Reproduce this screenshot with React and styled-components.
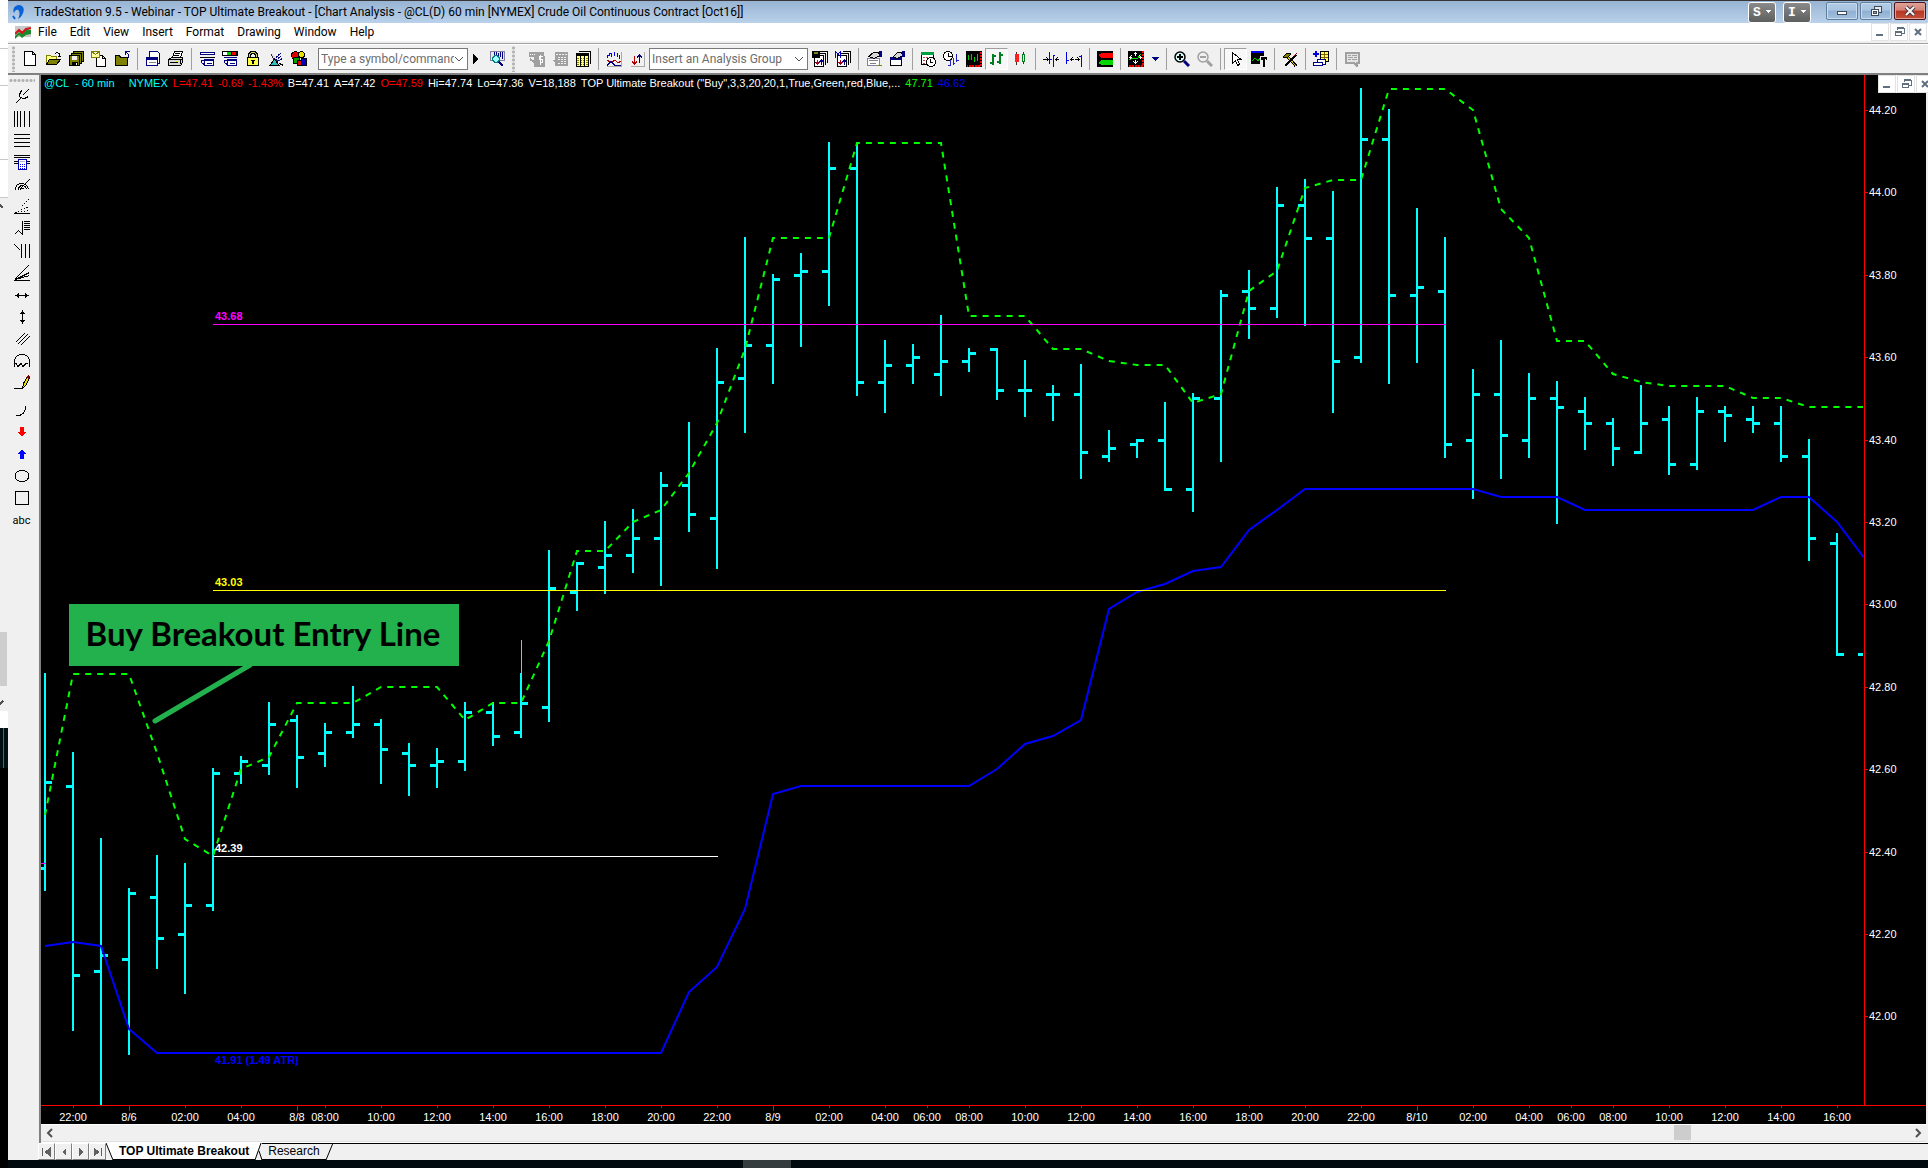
import React, { useState } from 'react';
import styled, { createGlobalStyle, css } from 'styled-components';

const GlobalStyle = createGlobalStyle`
    * {
        box-sizing: border-box;
    }

    body {
        margin: 0;
        background: #000;
        font-family: "Liberation Sans", Arial, sans-serif;
        font-size: 11px;
    }

    button, input, select {
        font-family: inherit;
        font-size: inherit;
        margin: 0;
        padding: 0;
    }
`

const uiFont = css`
    font-family: Roboto, "Noto Sans", sans-serif;
    font-size: 12px;
`

/* ---------- page ---------- */

const Desktop = styled.div`
    display: flex;
    min-height: 100vh;
    overflow: hidden;
`

const BackWindow = styled.div`
    width: 8px;
    flex: none;
    display: flex;
    flex-direction: column;
    background: #000;
`

const Strip = styled.div`
    height: ${p => p.$h}px;
    background: ${p => p.$bg};
    border-bottom: ${p => p.$line ? '1px solid #c8c8c8' : 'none'};
    display: flex;
    align-items: ${p => p.$align || 'center'};
`

const BackThumb = styled.div`
    width: 7px;
    height: 54px;
    background: #cdcdcd;
`

const BackWrap = styled.div`
    background: #f0f0f0;
`

const Main = styled.div`
    flex: 1;
    min-width: 0;
    display: flex;
    flex-direction: column;
`

const AppWindow = styled.div`
    background: #f0f0f0;
`

const Taskbar = styled.div`
    flex: 1;
    min-height: 8px;
    background: #000a0e;
    display: flex;
`

const TaskChip = styled.div`
    width: 48px;
    height: 8px;
    margin-left: 38.3%;
    background: #343c3e;
`

/* ---------- title and menu ---------- */

const TitleBar = styled.header`
    height: 23px;
    border-top: 1px solid #3a3638;
    background: linear-gradient(#98b4d3, #b9d1ea);
    display: flex;
    align-items: center;
    padding: 0 2px;
`

const Title = styled.h1`
    ${uiFont}
    flex: 1;
    margin: 0 0 0 8px;
    font-weight: normal;
    line-height: 20px;
    white-space: nowrap;
    overflow: hidden;
`

const Badge = styled.button`
    width: 28px;
    height: 21px;
    margin-right: 7px;
    border: 1px solid #fff;
    border-radius: 3px;
    background: linear-gradient(#8a8a8a, #5c5f5d);
    color: #fff;
    font-family: "Liberation Mono", monospace;
    font-size: 13px;
    font-weight: bold;
    display: flex;
    align-items: center;
    justify-content: center;
    gap: 5px;
`

const Frame = styled.div`
    display: flex;
    gap: 2px;
    margin-left: 8px;
    align-self: flex-start;
    padding-top: 1px;
`

const FrameButton = styled.button`
    width: 32px;
    height: 18px;
    border: 1px solid ${p => p.$close ? '#4a1420' : '#5f7f9f'};
    border-radius: 2px;
    box-shadow: inset 0 0 0 1px ${p => p.$close ? '#e0a095' : '#c8dcf0'};
    background: ${p => p.$close
        ? 'linear-gradient(#e0a297 0, #d58175 45%, #b63520 50%, #c4523a 100%)'
        : 'linear-gradient(#b4cce4 0, #a9c4e0 45%, #8fb0d2 50%, #a4c0dd 100%)'};
    display: flex;
    align-items: center;
    justify-content: center;
`

const MenuBar = styled.nav`
    ${uiFont}
    height: 18px;
    background: #fff;
    display: flex;
    align-items: center;
    padding-left: 7px;
`

const MenuLink = styled.a`
    margin-left: 13px;
    color: #000;
    text-decoration: none;
    line-height: 20px;

    svg + & {
        margin-left: 7px;
    }
`

const ChildButtons = styled.div`
    display: flex;
    gap: 1px;
    margin-left: auto;
    margin-right: 1px;
`

const ChildButton = styled.button`
    width: 18px;
    height: 18px;
    border: 1px solid #e2e2e2;
    background: #fff;
    display: flex;
    align-items: center;
    justify-content: center;
`

/* ---------- toolbars ---------- */

const Toolbar = styled.div`
    margin-top: 2px;
    height: 32px;
    border-top: 1px solid #a0a0a0;
    border-bottom: 2px solid #808080;
    box-shadow: inset 0 1px 0 #fff;
    display: flex;
    align-items: center;
    overflow: hidden;
`

const Grip = styled.div`
    flex: none;
    width: 3px;
    height: 26px;
    margin: 0 ${p => p.$gap}px 0 4px;
    background: radial-gradient(circle, #b0b0b0 1px, transparent 2px) 0 0 / 3px 4px;
`

const ToolButton = styled.button`
    flex: none;
    width: ${p => p.$w || 23}px;
    height: 22px;
    border: 1px solid;
    border-color: ${p => p.$down ? '#a0a0a0 #fff #fff #a0a0a0' : 'transparent'};
    background: ${p => p.$down ? '#f8f8f8' : 'transparent'};
    display: flex;
    align-items: center;
    justify-content: flex-start;
    padding-left: ${p => p.$w ? 0 : 3}px;
`

const Separator = styled.div`
    flex: none;
    width: 1px;
    height: 22px;
    margin: 0 3px 0 4px;
    background: #a0a0a0;
`

const Combo = styled.div`
    ${uiFont}
    flex: none;
    width: ${p => p.$w}px;
    height: 22px;
    margin-left: ${p => p.$gap}px;
    border: 1px solid #7a7a7a;
    background: #fff;
    display: flex;
    align-items: center;
    padding-right: 3px;

    input, select {
        flex: 1;
        min-width: 0;
        height: 18px;
        padding-left: 2px;
        border: 0;
        outline: 0;
        appearance: none;
        background: transparent;
        color: #6d6d6d;
    }

    input::placeholder {
        color: #6d6d6d;
    }
`

const Body = styled.div`
    display: flex;
`

const SideBar = styled.div`
    flex: none;
    width: 33px;
    border-right: 2px solid #808080;
    padding: 4px 4px 0 0;
    display: flex;
    flex-direction: column;
    align-items: center;
`

const SideGrip = styled.div`
    width: 26px;
    height: 3px;
    margin-bottom: 4px;
    background: radial-gradient(circle, #b0b0b0 1px, transparent 2px) 0 0 / 4px 3px;
`

const SideGroup = styled.div`
    margin-bottom: 5px;
`

const SideButton = styled.button`
    ${uiFont}
    width: 24px;
    height: 22px;
    border: 0;
    background: transparent;
    color: #000;
    display: flex;
    align-items: center;
    justify-content: center;
    font-size: 11px;
`

/* ---------- chart ---------- */

const ChartColumn = styled.main`
    flex: 1;
    min-width: 0;
    padding-right: 2px;
`

const ChartFrame = styled.div`
    position: relative;
    background: #000;
`

const Quote = styled.div`
    position: absolute;
    top: 2px;
    left: 3px;
    display: flex;
    gap: 5px;
    line-height: 13px;
    white-space: pre;
`

const QuoteItem = styled.span`
    color: ${p => p.$c || '#fff'};
    margin-right: ${p => p.$gap || 0}px;
`

const ChartButtons = styled.div`
    position: absolute;
    top: 0;
    right: -8px;
    display: flex;
    background: #fff;
    gap: 1px;
    clip-path: inset(0 6px 0 0);
`

const ChartSvg = styled.svg`
    display: block;
    width: 100%;
    height: auto;
    font-family: "Liberation Sans", Arial, sans-serif;
    font-size: 11px;
`

const ScrollBar = styled.div`
    height: 19px;
    border-top: 1px solid #fff;
    border-bottom: 1px solid #fff;
    box-shadow: inset 0 -1px 0 #e0e0e0;
    display: flex;
`

const ScrollButton = styled.button`
    width: 17px;
    height: 16px;
    border: 0;
    background: transparent;
    display: flex;
    align-items: center;
    justify-content: center;
`

const Track = styled.div`
    flex: 1;
    display: flex;
    justify-content: flex-end;
`

const Thumb = styled.div`
    width: 17px;
    height: 15px;
    margin-right: 11.8%;
    background: #cdcdcd;
`

/* ---------- sheet tabs ---------- */

const TabBar = styled.div`
    display: flex;
    height: 17px;
    margin-left: 30px;
`

const TabNav = styled.button`
    width: 17px;
    height: 17px;
    border: 1px solid;
    border-color: #fff #808080 #808080 #fff;
    background: #f0f0f0;
    display: flex;
    align-items: center;
    justify-content: center;
`

const Tab = styled.button`
    height: 17px;
    padding: 0 6px;
    border: 0;
    border-top: 1px solid ${p => p.$active ? '#fff' : '#000'};
    border-bottom: 1px solid #000;
    background: ${p => p.$active ? '#fff' : '#f0f0f0'};
    color: #000;
    font-size: 12px;
    font-weight: ${p => p.$active ? 'bold' : 'normal'};
    line-height: 15px;
    white-space: nowrap;
`

const TabRest = styled.div`
    flex: 1;
    border-top: 1px solid #000;
`

/* ---------- icons ---------- */

const NAVY = '#000080'
const OLIVE = '#808000'

const icons = {
    logo: <>
        <path d="M4 9C2 5 5 1 9 1c4 0 6 4 4 8-1 3-3 5-5 6 2-4 2-8 0-9-2-1-3 1-4 3z" fill="#0a62d8" />
        <path d="M3 12l2 3" stroke="#0a62d8" strokeWidth="2" />
    </>,
    doc: <>
        <rect x="0" y="2" width="16" height="11" fill="#c9c9c9" />
        <path d="M0 12l4-4 3 2 4-5 5 1v4l-5 1-4 3-3-3-4 4z" fill="#1b8a2d" />
        <path d="M0 10l4-4 3 3 4-4 5-1" fill="none" stroke="#d01818" strokeWidth="2" />
    </>,
    newPage: <path d="M2.5 .5h8l3 3v11h-11zM10.5 .5v3h3" fill="#fff" stroke="#000" />,
    open: <>
        <path d="M1.5 13.5v-9h4l1 1h5v3" fill="#ffff80" stroke={OLIVE} />
        <path d="M1.500 13.500l3-5h11l-4 5z" fill={OLIVE} stroke="#000" />
        <path d="M9.500 3.500l2-2 3 1v3M12.500 5.500h4" fill="none" stroke="#000" />
    </>,
    saveAll: <>
        <path d="M5.5.5h10v10h-10z" fill={OLIVE} stroke="#000" />
        <path d="M3.500 2.500h10v10h-10z" fill={OLIVE} stroke="#000" />
        <path d="M1.500 4.500h10v10h-10z" fill={OLIVE} stroke="#000" />
        <rect x="4" y="5" width="5" height="4" fill="#f0f0f0" />
        <rect x="4" y="11" width="6" height="3" fill="#000" />
        <rect x="8" y="12" width="1" height="2" fill="#fff" />
    </>,
    mailPage: <>
        <path d="M5.500 4.500h6l3 3v8h-9zM11.500 4.500v3h3" fill="#fff" stroke="#000" />
        <path d="M.5.5h8v6h-8zl4 3 4-3" fill="#ffffa0" stroke={OLIVE} />
    </>,
    folderBack: <>
        <path d="M1.500 14.500v-10h4l1 2h7v8z" fill={OLIVE} stroke="#000" />
        <path d="M14.500 6.500V3.500l-3-3M11.500 4V.5h4" fill="none" stroke={NAVY} />
    </>,
    window: <>
        <path d="M4.500.5h8l2 2v10h-10z" fill="#fff" stroke={NAVY} />
        <rect x="1.500" y="6.500" width="11" height="8" fill="#fff" stroke="#000080" />
        <rect x="2" y="7" width="10" height="2" fill={NAVY} />
        <path d="M4 11.500h7" stroke="#888" />
    </>,
    print: <>
        <path d="M4.500 6.500l2-6h8l-2 6z" fill="#fff" stroke="#000" />
        <path d="M7 2.500h5M6 4.500h5" stroke="#000" />
        <path d="M.5 8.500l3-2h11v5l-2 3h-12z" fill="#d8d8d8" stroke="#000" />
        <path d="M1 8.500h11v4M2 11.500h8M13 9l2-2" stroke="#000" fill="none" />
        <rect x="8" y="10" width="2" height="1" fill="#e8e800" />
    </>,
    lists: <>
        <rect x="1" y="1" width="15" height="3" fill={NAVY} />
        <rect x="2" y="2" width="13" height="1" fill="#fff" />
        <path d="M1 6.500h15" stroke="#000" />
        <rect x="5.500" y="8.500" width="9" height="6" fill="#fff" stroke={NAVY} />
        <path d="M5 9.500h10M8 12.500h5M5 13.500L2.500 11.500v-2h3" stroke={NAVY} fill="none" />
    </>,
    listsColor: <>
        <rect x="0" y="0" width="16" height="5" fill="#000" />
        <rect x="1" y="1" width="4" height="3" fill="#fff" />
        <rect x="5" y="1" width="4" height="3" fill="#0c0" />
        <rect x="10" y="1" width="4" height="3" fill="#e00" />
        <rect x="5.500" y="8.500" width="9" height="6" fill="#fff" stroke={NAVY} />
        <path d="M2 6.500h13M5 9.500h10M8 12.500h5M5 13.500L2.500 11.500v-2h3" stroke={NAVY} fill="none" />
    </>,
    lock: <>
        <path d="M4.500 7V3.500l2-2h3l2 2V7" fill="none" stroke="#000" strokeWidth="3" />
        <path d="M4.500 7V3.500l2-2h3l2 2V7" fill="none" stroke="#d8d060" />
        <rect x="2.500" y="6.500" width="11" height="8" fill="#ffff40" stroke="#000" />
        <path d="M6 9.500h4M7 10.500h2M7 11.500h2M7 12.500h2" stroke="#000" />
    </>,
    dish: <>
        <path d="M3.500 2.500c0 5 4 7 8 7" fill="#ddd" stroke="#333" />
        <path d="M5.500 8.500l8-7M7.500 9.500l6-5M9.500 10.500l5-3" stroke={NAVY} strokeDasharray="2 1" />
        <path d="M1.500 14.500l5-6 5 6z" fill="#30c0c0" stroke="#000" />
        <path d="M11.500 12.500l4 2" stroke="#000" />
    </>,
    cubes: <>
        <circle cx="4.500" cy="4.500" r="4" fill="#e00000" stroke="#000" />
        <circle cx="10.500" cy="3.500" r="3" fill="#e8e000" stroke="#000" />
        <rect x="2.500" y="6.500" width="6" height="6" fill="#00a000" stroke="#000" />
        <rect x="6.500" y="9.500" width="4" height="5" fill="#e00000" stroke="#000" />
        <rect x="10.500" y="7.500" width="5" height="7" fill="#0000c0" stroke="#000" />
    </>,
    play: <path d="M4 3l5 5-5 5z" fill="#000" />,
    find: <>
        <rect x="1.500" y=".5" width="14" height="9" fill="#e8e8e8" stroke="#8080a0" />
        <path d="M5.500 1v4M7.500 1v3M9.500 2v5M11.500 1v5M13.500 1v7" stroke={NAVY} />
        <circle cx="7" cy="8" r="3.500" fill="#a0ffff" stroke="#008080" strokeWidth="1.500" />
        <path d="M10 11l4 4" stroke={NAVY} strokeWidth="2" />
    </>,
    greyDollar: <>
        <rect x="0" y="1" width="15" height="5" fill="#a0a0a0" />
        <rect x="5" y="5" width="11" height="11" fill="#a0a0a0" />
        <path d="M1 3.500h5M2 7.500l2 2" stroke="#fff" strokeDasharray="1 1" />
        <path d="M13.500 5.500h-3v3h3v3h-3M11.500 4v10" stroke="#fff" fill="none" />
        <path d="M1 8l4 3" stroke="#a0a0a0" strokeWidth="2" />
    </>,
    greyTable: <>
        <rect x="3" y="1" width="13" height="14" fill="#a0a0a0" />
        <path d="M4 3.500h11M6 6.500h9M6 8.500h9M6 10.500h9M6 12.500h9" stroke="#f0f0f0" strokeDasharray="2 1" />
        <path d="M0 9l5-1 3 3H2z" fill="#a0a0a0" />
    </>,
    table: <>
        <path d="M3.500.5h12v12" fill="none" stroke="#000" />
        <rect x="1.500" y="2.500" width="12" height="13" fill="#ffff80" stroke="#000" />
        <rect x="1" y="2" width="13" height="3" fill="#000" />
        <path d="M2 7.500h11M2 9.500h11M2 11.500h11M2 13.500h11" stroke={OLIVE} strokeDasharray="2 1" />
        <path d="M5.500 5v10M9.500 5v10" stroke="#000" />
    </>,
    study: <>
        <path d="M1.500 7V4.500h2V2.500h2v3M8.500 5V1M11.500 6V2M13.500 8V4M15.500 8V5" stroke="#0000e0" fill="none" />
        <path d="M1 9l4 3 4-3 3 3 3-2" stroke="#b00000" fill="none" />
        <path d="M1 14.500l4-4 4 4h6" stroke={NAVY} fill="none" />
        <path d="M15.500 1v14.500H1" stroke="#aaa" fill="none" />
    </>,
    upDown: <>
        <path d="M5.500 5v8M3 10.500l2.500 2.500L8 10.500" stroke="#b00000" fill="none" />
        <path d="M10.500 12V4M8 6.500L10.500 4l2.500 2.500" stroke={NAVY} fill="none" />
        <path d="M15.500 1v14.500H2" stroke="#aaa" fill="none" />
    </>,
    groupSave: <>
        <path d="M6.500.5h9v11M5.500 2.500h8v11" fill="none" stroke="#000" />
        <rect x="2.500" y="4.500" width="9" height="11" fill="#fff" stroke="#000" />
        <rect x="0" y="0" width="8" height="7" fill="#000" />
        <rect x="2" y="1" width="4" height="2" fill={OLIVE} />
        <path d="M5.500 9v5M3.500 11l2 2 2-2" stroke="#a00020" fill="none" />
        <path d="M9.500 14V9M7.500 11l2-2 2 2" stroke={NAVY} fill="none" />
    </>,
    groupManage: <>
        <path d="M7.500.5h8v11M5.500 2.500h8v11" fill="none" stroke="#000" />
        <rect x="2.500" y="4.500" width="9" height="11" fill="#fff" stroke="#000" />
        <path d="M.5 7V.5l2.500 3L5.500.5V7" fill="none" stroke="#0000d0" />
        <path d="M5.500 9v5M3.500 11l2 2 2-2" stroke="#a00020" fill="none" />
        <path d="M9.500 14V9M7.500 11l2-2 2 2" stroke={NAVY} fill="none" />
    </>,
    handChart: <>
        <rect x="1.500" y="7.500" width="12" height="7" fill="#fff" stroke="#8080a0" />
        <path d="M3 9.500h9M4 12.500h6" stroke="#808080" />
        <path d="M2.500 5.500l5-4h5l1 3-5 3-3-1z" fill="#d8d8d8" stroke="#000" />
        <rect x="13" y="0" width="3" height="6" fill={NAVY} />
        <path d="M12 14.500h4" stroke={OLIVE} />
    </>,
    handWindow: <>
        <rect x="1.500" y="6.500" width="11" height="8" fill="#fff" stroke="#000" />
        <rect x="1" y="6" width="12" height="3" fill={NAVY} />
        <path d="M4.500 5.500l4-4h4l1 3-5 3-3-1z" fill="#d8d8d8" stroke="#000" />
        <rect x="13" y="0" width="3" height="6" fill={NAVY} />
    </>,
    calendar: <>
        <rect x="1.500" y="2.500" width="12" height="11" fill="#fff" stroke="#000" />
        <rect x="1" y="1" width="13" height="3" fill="#00a040" />
        <path d="M3 6.500h9M3 9.500h9M3 12.500h5" stroke="#c04040" strokeDasharray="2 1" />
        <circle cx="11" cy="11" r="4.500" fill="#fff" stroke="#000" />
        <path d="M10.500 8v3.500h2" stroke="#000" fill="none" />
    </>,
    clockBars: <>
        <circle cx="5" cy="5" r="4.500" fill="#fff" stroke="#000" />
        <path d="M5.500 2v3.500h3" stroke="#000" fill="none" />
        <path d="M7.500 9v6M10.500 7v7M13.500 3v8M7 14.500h-2M13 9.500h3M10 12.500h2" stroke="#2020c0" fill="none" />
    </>,
    chartBlack: <>
        <rect x="0" y="0" width="16" height="16" fill="#000" />
        <path d="M2.500 4v5M5.500 3v6M8.500 6v5M11.500 3v7" stroke="#00d000" />
        <path d="M15 1v14H1" stroke="#f00" strokeWidth="2" fill="none" strokeDasharray="2 1" />
    </>,
    ohlc: <path d="M4 3v11M1 12h3M4 5h3M11 1v12M8 11h3M11 4h3" stroke="#008020" strokeWidth="2" fill="none" />,
    candles: <>
        <path d="M4.500 1v13M11.500 1v12" stroke="#333" />
        <rect x="3" y="3" width="4" height="8" fill="#ff2020" />
        <rect x="10" y="3" width="3" height="8" fill="#008020" />
        <rect x="11" y="4" width="1" height="6" fill="#fff" />
    </>,
    squeeze: <>
        <path d="M6.500 1v12M10.500 4v12M6 8.500h3M10 4.500h2" stroke="#0000e0" />
        <path d="M0 8.500h5M3.500 6.500l2 2-2 2M16 8.500h-4M14.500 6.500l-2 2 2 2" stroke="#000" fill="none" />
    </>,
    stretch: <>
        <path d="M.5 1v12M15.500 4v12M0 9.500h3M13 5.500h3" stroke="#0000e0" />
        <path d="M4 8.500h4M6.500 6.500l-2 2 2 2M9 8.500h4M11.500 6.500l2 2-2 2" stroke="#000" fill="none" />
    </>,
    matrix: <>
        <rect x="0" y="0" width="16" height="16" fill="#000" />
        <path d="M1 4l4-2h11v5H5z" fill="#f00" />
        <path d="M1 12l4-3h11v5H5z" fill="#00d800" />
    </>,
    chartMove: <>
        <rect x="0" y="0" width="16" height="16" fill="#000" />
        <path d="M1 9l4-2 4 1 4-5" stroke="#00e000" fill="none" />
        <path d="M7.500 1v4M7.500 9v4M1 6.500h3M11 6.500h3M5.500 3.500l2-2 2 2M5.500 10.500l2 2 2-2M3.500 4.500l-2 2 2 2M11.500 4.500l2 2-2 2" stroke="#fff" fill="none" />
        <path d="M15 0v15H0" stroke="#f00" strokeWidth="2" fill="none" strokeDasharray="2 1" />
    </>,
    caret: <path d="M3 6h8l-4 4z" fill={NAVY} />,
    zoomIn: <>
        <circle cx="6" cy="6" r="5" fill="#d8ffff" stroke="#000" strokeWidth="1.500" />
        <path d="M6 3v6M3 6h6" stroke="#000" strokeWidth="2" />
        <path d="M10 10l5 5" stroke={NAVY} strokeWidth="3" />
    </>,
    zoomOut: <>
        <circle cx="6" cy="6" r="5" fill="none" stroke="#a0a0a0" strokeWidth="1.500" />
        <path d="M3 6h6" stroke="#a0a0a0" strokeWidth="2" />
        <path d="M10 10l5 5" stroke="#a0a0a0" strokeWidth="3" />
    </>,
    cursor: <path d="M4.500 1.500v11l3-3 2 5 2-1-2-5h3.500z" fill="#fff" stroke="#000" />,
    chartText: <>
        <rect x="0" y="0" width="13" height="13" fill="#000" />
        <rect x="0" y="0" width="13" height="2" fill="#0000f0" />
        <path d="M1 9.500l3-2 3 2 3-3" stroke="#00d000" fill="none" />
        <rect x="9" y="5" width="7" height="11" fill="#f0f0f0" />
        <path d="M10 7h6M13 7v8M12 15h2M10.500 6v3M15.500 6v3" stroke="#000" strokeWidth="2" />
    </>,
    tools: <>
        <path d="M4 4l10 11" stroke="#000" strokeWidth="3" />
        <path d="M4 4l10 11" stroke="#e0c000" />
        <path d="M3 15L14 4" stroke="#000" strokeWidth="2" />
        <path d="M1 6l4-4h4l-1 2-3 3z" fill={OLIVE} stroke="#000" />
        <path d="M12 5l3-3" stroke="#a00000" />
    </>,
    addTable: <>
        <path d="M0 3h6M3 0v6" stroke="#0000e0" strokeWidth="2" />
        <rect x="7.500" y=".5" width="8" height="10" fill="#ffff60" stroke="#000" />
        <path d="M8 3.500h7M8 6.500h7M11.500 1v9" stroke="#806000" />
        <path d="M4.500 8.500h8v5h-8z" fill="#fff" stroke={NAVY} />
        <path d="M.5 11.500h9v3h-9z" fill="#fff" stroke={NAVY} />
    </>,
    note: <>
        <path d="M1.500 1.500h13v10h-2v3l-3-3h-8z" fill="#e4e4e4" stroke="#a0a0a0" strokeWidth="2" />
        <path d="M4 4.500h3M8 4.500h5M4 6.500h5M10 6.500h3M4 8.500h3M8 8.500h5" stroke="#a0a0a0" />
    </>,
    pitchfork: <path d="M1.500 14.500l5-5M7.500 1.500L5.500 5.500v2l3 2h2l4-2M8.500 6.500l6-6" stroke="#000" fill="none" />,
    vLines: <path d="M.5 0v16M3.500 0v16M6.500 0v16M10.500 0v16M15.500 0v16" stroke="#000" />,
    hLines: <path d="M0 1.500h16M0 5.500h16M0 9.500h16M0 13.500h16" stroke="#000" />,
    calc: <>
        <path d="M0 .5h16M0 2.500h16M0 6.500h16M0 8.500h16" stroke="#000" />
        <rect x="4.500" y="4.500" width="8" height="10" fill="#fff" stroke="#0000b0" />
        <path d="M6 9.500h6M6 11.500h6M6 13.500h6" stroke="#0000ff" strokeDasharray="1 1" />
        <path d="M6 6.500h5" stroke="#b0b0e0" />
    </>,
    arcs: <path d="M1.500 12.500c0-8 12-8 13 0M4.500 12.500c0-5 7-5 8 0M6.500 12.500c0-2 3-2 4 0M5.500 12.500L15.500 2.500" stroke="#000" fill="none" />,
    fanDots: <>
        <path d="M0 14.500h16" stroke="#000" />
        <path d="M1.500 13.500l13-13M1.500 13.500l14-6M1.500 13.500l14-2" stroke="#000" strokeDasharray="1 2" />
    </>,
    retrace: <path d="M.5 13.500l4-4 4 4V0M10 .5h6M10 2.500h6M10 4.500h6M10 6.500h6M10 8.500h6" stroke="#000" fill="none" />,
    timeLines: <path d="M.5 1.500l6 6M7.500 1v14M11.500 1v14M15.500 1v14" stroke="#000" />,
    fan: <path d="M0 15.500h16M.5 14.500l14-14M1.500 14.500l14-7M1.500 14.500l14-4" stroke="#000" />,
    hArrow: <>
        <path d="M3 8.500h10" stroke="#000" />
        <path d="M5 6v5L1 8.500zM11 6v5l4-2.500z" fill="#000" />
    </>,
    vArrow: <>
        <path d="M8.500 3v10" stroke="#000" />
        <path d="M6 5h5L8.500 1zM6 11h5l-2.500 4z" fill="#000" />
    </>,
    parallels: <path d="M1.500 11.500l9-9M3.500 13.500l10-10M6.500 14.500l9-9" stroke="#000" />,
    cycle: <path d="M.5 14V8c1-9 14-9 15 0v6M1 10.500h1l2 3 3-3 2 3 3-3h2" stroke="#000" fill="none" />,
    pencil: <>
        <path d="M0 13.500h8" stroke="#000" />
        <path d="M8.500 13.500l1-5 4-7 2 1-3 7z" fill="#e8e000" stroke="#000" />
        <path d="M12 3l3 1 1-3-2-1z" fill="#800000" />
    </>,
    curve: <path d="M2 13.500c6 1 10-4 10-10" stroke="#000" fill="none" />,
    arrowDown: <path d="M6 3h4v5h2l-4 5-4-5h2z" fill="#f00" />,
    arrowUp: <path d="M6 13h4V8h2L8 3 4 8h2z" fill="#00f" />,
    ellipse: <ellipse cx="8" cy="8" rx="7" ry="5.500" stroke="#000" fill="none" />,
    rect: <rect x="1.500" y="1.500" width="13" height="13" stroke="#000" fill="none" />,
    minimise: <path d="M4 11h7" stroke="#5f6f80" strokeWidth="2" />,
    restore: <>
        <path d="M6 6V4h7v5h-2" fill="none" stroke="#5f6f80" />
        <path d="M6 4h7" stroke="#5f6f80" strokeWidth="2" />
        <path d="M4.500 7.500h6v4h-6z" fill="none" stroke="#5f6f80" />
        <path d="M4 8h7" stroke="#5f6f80" strokeWidth="2" />
    </>,
    close: <path d="M5 5l6 6M11 5l-6 6" stroke="#5f6f80" strokeWidth="2" />,
    frameMin: <rect x="3.500" y="8.500" width="9" height="3" rx="1" fill="#fff" stroke="#3c4a5c" />,
    frameRestore: <>
        <rect x="6.500" y="3.500" width="7" height="6" fill="#e8e8e8" stroke="#3c4a5c" />
        <rect x="3.500" y="6.500" width="7" height="6" fill="#fff" stroke="#3c4a5c" />
        <rect x="5.500" y="8.500" width="3" height="2" fill="#9ab" stroke="#3c4a5c" />
    </>,
    frameClose: <>
        <path d="M4 4l8 8M12 4l-8 8" stroke="#4b3a42" strokeWidth="4" />
        <path d="M4 4l8 8M12 4l-8 8" stroke="#f4f4f4" strokeWidth="2" />
    </>,
    chevronDown: <path d="M1 6l4 4 4-4" fill="none" stroke="#505050" />,
    chevronLeft: <path d="M10 4L6 8l4 4" fill="none" stroke="#505050" strokeWidth="2" />,
    chevronRight: <path d="M6 4l4 4-4 4" fill="none" stroke="#505050" strokeWidth="2" />,
    badgeCaret: <path d="M0 6h5l-2.500 3z" fill="#fff" />,
    backUp: <path d="M-2 9l2-2 3 3" fill="none" stroke="#505050" strokeWidth="2" />,
    backDown: <path d="M-2 7l2 2 3-3" fill="none" stroke="#505050" strokeWidth="2" />,
    first: <path d="M3.500 4v8M11 4v8L6.500 8z" fill="#606060" stroke="#606060" />,
    prev: <path d="M10 4v8L6 8z" fill="#606060" />,
    next: <path d="M6 4v8l4-4z" fill="#606060" />,
    last: <path d="M11.500 4v8M4 4v8l4.500-4z" fill="#606060" stroke="#606060" />,
}

const smooth = ['logo', 'doc', 'zoomIn', 'zoomOut', 'close', 'frameClose', 'chevronDown', 'chevronLeft', 'chevronRight']

const Icon = ({ name, width = 16 }) => (
    <svg
        width={width}
        height="16"
        viewBox={`0 0 ${width} 16`}
        shapeRendering={smooth.includes(name) ? 'auto' : 'crispEdges'}
        aria-hidden="true"
    >
        {icons[name]}
    </svg>
)

/* ---------- data ---------- */

// open, high, low, close of each hourly bar
const bars = [
    [42.36, 42.83, 42.31, 42.57], [42.56, 42.64, 41.97, 42.10], [42.11, 42.43, 41.79, 42.15],
    [42.14, 42.31, 41.91, 42.30], [42.29, 42.39, 42.12, 42.19], [42.20, 42.37, 42.06, 42.27],
    [42.27, 42.60, 42.26, 42.59], [42.59, 42.63, 42.57, 42.62], [42.61, 42.76, 42.59, 42.71],
    [42.72, 42.73, 42.56, 42.63], [42.64, 42.71, 42.61, 42.69], [42.69, 42.80, 42.68, 42.71],
    [42.71, 42.72, 42.57, 42.65], [42.64, 42.66, 42.54, 42.61], [42.61, 42.65, 42.56, 42.62],
    [42.62, 42.76, 42.60, 42.74], [42.74, 42.76, 42.66, 42.68], [42.69, 42.83, 42.68, 42.76],
    [42.75, 43.13, 42.72, 43.04], [43.03, 43.10, 42.99, 43.10], [43.09, 43.20, 43.03, 43.12],
    [43.12, 43.23, 43.08, 43.16], [43.16, 43.32, 43.05, 43.29], [43.29, 43.44, 43.18, 43.22],
    [43.21, 43.62, 43.09, 43.54], [43.55, 43.89, 43.42, 43.63], [43.63, 43.80, 43.54, 43.79],
    [43.80, 43.85, 43.63, 43.81], [43.81, 44.12, 43.73, 44.06], [44.06, 44.12, 43.51, 43.54],
    [43.54, 43.64, 43.47, 43.58], [43.58, 43.63, 43.54, 43.60], [43.56, 43.70, 43.51, 43.59],
    [43.59, 43.62, 43.57, 43.61], [43.62, 43.62, 43.50, 43.52], [43.52, 43.59, 43.46, 43.52],
    [43.51, 43.53, 43.45, 43.51], [43.51, 43.58, 43.31, 43.37], [43.36, 43.42, 43.35, 43.38],
    [43.39, 43.40, 43.36, 43.40], [43.40, 43.49, 43.28, 43.28], [43.28, 43.51, 43.23, 43.50],
    [43.50, 43.76, 43.35, 43.75], [43.76, 43.81, 43.65, 43.72], [43.72, 44.01, 43.70, 43.97],
    [43.97, 44.03, 43.68, 43.89], [43.89, 44.00, 43.47, 43.59], [43.60, 44.25, 43.59, 44.13],
    [44.13, 44.20, 43.54, 43.75], [43.75, 43.96, 43.59, 43.77], [43.76, 43.89, 43.36, 43.39],
    [43.40, 43.57, 43.26, 43.51], [43.51, 43.64, 43.31, 43.41], [43.40, 43.56, 43.36, 43.50],
    [43.50, 43.54, 43.20, 43.48], [43.47, 43.50, 43.38, 43.44], [43.44, 43.45, 43.34, 43.38],
    [43.37, 43.53, 43.37, 43.44], [43.45, 43.48, 43.32, 43.34], [43.34, 43.50, 43.33, 43.47],
    [43.47, 43.48, 43.40, 43.46], [43.45, 43.48, 43.42, 43.44], [43.44, 43.48, 43.35, 43.36],
    [43.36, 43.40, 43.11, 43.16], [43.15, 43.17, 42.88, 42.88],
]

const buyLine = [
    42.49, 42.83, 42.83, 42.83, 42.64, 42.43, 42.39, 42.60, 42.63, 42.76, 42.76, 42.76, 42.80,
    42.80, 42.80, 42.72, 42.76, 42.76, 42.91, 43.13, 43.13, 43.20, 43.23, 43.32, 43.44, 43.62,
    43.89, 43.89, 43.89, 44.12, 44.12, 44.12, 44.12, 43.70, 43.70, 43.70, 43.62, 43.62, 43.59,
    43.58, 43.58, 43.49, 43.51, 43.76, 43.81, 44.01, 44.03, 44.03, 44.25, 44.25, 44.25, 44.20,
    43.96, 43.89, 43.64, 43.64, 43.56, 43.54, 43.53, 43.53, 43.53, 43.50, 43.50, 43.48, 43.48,
    43.48,
]

const stopLine = [
    42.17, 42.18, 42.17, 41.97, ...Array(19).fill(41.91), 42.06, 42.12, 42.26, 42.54,
    ...Array(7).fill(42.56), 42.60, 42.66, 42.68, 42.72, 42.99, 43.03, 43.05, 43.08, 43.09,
    43.18, 43.23, ...Array(7).fill(43.28), 43.26, 43.26, 43.26, ...Array(7).fill(43.23),
    43.26, 43.26, 43.20, 43.11,
]

const prices = [44.2, 44, 43.8, 43.6, 43.4, 43.2, 43, 42.8, 42.6, 42.4, 42.2, 42]

// label and position counted in bars
const times = [
    ['22:00', 1], ['8/6', 3], ['02:00', 5], ['04:00', 7], ['8/8', 9], ['08:00', 10],
    ['10:00', 12], ['12:00', 14], ['14:00', 16], ['16:00', 18], ['18:00', 20], ['20:00', 22],
    ['22:00', 24], ['8/9', 26], ['02:00', 28], ['04:00', 30], ['06:00', 31.5], ['08:00', 33],
    ['10:00', 35], ['12:00', 37], ['14:00', 39], ['16:00', 41], ['18:00', 43], ['20:00', 45],
    ['22:00', 47], ['8/10', 49], ['02:00', 51], ['04:00', 53], ['06:00', 54.5], ['08:00', 56],
    ['10:00', 58], ['12:00', 60], ['14:00', 62], ['16:00', 64],
]

const quote = [
    ['@CL  - 60 min', '#00ffff', 9], ['NYMEX', '#00ffff'], ['L=47.41', '#ff0000'],
    ['-0.69', '#ff0000'], ['-1.43%', '#ff0000'], ['B=47.41'], ['A=47.42'],
    ['O=47.59', '#ff0000'], ['Hi=47.74'], ['Lo=47.36'], ['V=18,188'],
    ['TOP Ultimate Breakout ("Buy",3,3,20,20,1,True,Green,red,Blue,...'],
    ['47.71', '#00ff00'], ['46.62', '#0000ff'],
]

const menus = ['File', 'Edit', 'View', 'Insert', 'Format', 'Drawing', 'Window', 'Help']

const drawTools = [
    'pitchfork', 'vLines', 'hLines', 'calc', 'arcs', 'fanDots', 'retrace', 'timeLines', 'fan',
    'hArrow', 'vArrow', 'parallels', 'cycle', 'pencil',
]
const shapeTools = ['curve', 'arrowDown', 'arrowUp', 'ellipse', 'rect']

const AXIS_X = 1823
const AXIS_Y = 1030
const px = i => 4 + 28 * i
const py = p => Math.round(35 + (44.2 - p) * 412)
const points = line => line.map((p, i) => `${px(i)},${py(p)}`).join(' ')

/* ---------- components ---------- */

const Bar = ({ x, bar: [open, high, low, close] }) => (
    <g fill="#00ffff">
        <rect x={x - 1} y={py(high) - 1} width="2" height={py(low) - py(high) + 3} />
        <rect x={x - 7} y={py(open) - 1} width="6" height="3" />
        <rect x={x + 1} y={py(close) - 1} width="6" height="3" />
    </g>
)

const Level = ({ x2, y, color, label }) => (
    <g>
        <rect x="172" y={y} width={x2 - 172} height="1" fill={color} shapeRendering="crispEdges" />
        <text x="174" y={y - 4} fill={color} fontWeight="bold">{label}</text>
    </g>
)

const Chart = () => (
    <ChartSvg viewBox="0 0 1885 1049" role="img" aria-label="Crude Oil 60 minute chart">
        <clipPath id="plot"><rect x="0" y="0" width={AXIS_X - 1} height={AXIS_Y} /></clipPath>
        <g clipPath="url(#plot)">
            <g shapeRendering="crispEdges">
                {bars.map((bar, i) => <Bar key={i} x={px(i)} bar={bar} />)}
                <rect x={px(65) - 7} y={py(42.88) - 1} width="6" height="3" fill="#00ffff" />
                <rect x="480" y="565" width="1" height="40" fill="#00ffff" />
                <rect x="0" y="788" width="5" height="1" fill="#ff00ff" />
            </g>
            <polyline points={points(stopLine)} fill="none" stroke="#0000ff" strokeWidth="2" />
            <polyline points={points(buyLine)} fill="none" stroke="#00ff00" strokeWidth="2" strokeDasharray="6 6" />
        </g>
        <Level x2={1405} y={249} color="#ff00ff" label="43.68" />
        <Level x2={1405} y={515} color="#ffff00" label="43.03" />
        <Level x2={677} y={781} color="#ffffff" label="42.39" />
        <text x="174" y="989" fill="#0000ff" fontWeight="bold">41.91 (1.49 ATR)</text>

        <path d="M209 590L114 646" stroke="#22b14c" strokeWidth="5" strokeLinecap="round" />
        <rect x="28" y="529" width="390" height="62" fill="#22b14c" />
        <text x="222" y="571" textAnchor="middle" fontFamily="Lato, sans-serif" fontSize="33" fontWeight="bold">
            Buy Breakout Entry Line
        </text>

        <g fill="#ff0000" shapeRendering="crispEdges">
            <rect x={AXIS_X} y="0" width="1" height={AXIS_Y} />
            <rect x="0" y={AXIS_Y} width="1885" height="1" />
            {prices.map(p => <rect key={p} x={AXIS_X} y={py(p)} width="4" height="1" />)}
            {times.map(([label, i]) => (
                <rect key={i} x={px(i)} y={AXIS_Y} width="1" height={label.includes('/') ? 6 : 3} />
            ))}
        </g>
        <g fill="#fff">
            {prices.map(p => <text key={p} x="1828" y={py(p) + 4}>{p.toFixed(2)}</text>)}
            {times.map(([label, i]) => (
                <text key={i} x={px(i)} y="1046" textAnchor="middle">{label}</text>
            ))}
        </g>
    </ChartSvg>
)

const Tools = ({ names }) => names.map(name => (
    <ToolButton key={name} aria-label={name}><Icon name={name} /></ToolButton>
))

const ChildControls = () => ['minimise', 'restore', 'close'].map(name => (
    <ChildButton key={name} aria-label={name}><Icon name={name} /></ChildButton>
))

const MainToolbar = () => {
    const [symbol, setSymbol] = useState('')

    return (
        <Toolbar>
            <Grip $gap={3} />
            <Tools names={['newPage', 'open', 'saveAll', 'mailPage', 'folderBack']} />
            <Separator />
            <Tools names={['window', 'print']} />
            <Separator />
            <Tools names={['lists', 'listsColor', 'lock', 'dish', 'cubes']} />
            <Combo $w={150} $gap={8}>
                <input
                    aria-label="Symbol or command"
                    placeholder="Type a symbol/command"
                    value={symbol}
                    onChange={e => setSymbol(e.target.value)}
                />
                <Icon name="chevronDown" width={10} />
            </Combo>
            <ToolButton $w={17} aria-label="run"><Icon name="play" width={15} /></ToolButton>
            <Tools names={['find']} />
            <Grip $gap={10} />
            <Tools names={['greyDollar', 'greyTable', 'table']} />
            <Separator />
            <Tools names={['study', 'upDown']} />
            <Combo $w={159} $gap={1}>
                <select aria-label="Analysis group">
                    <option>Insert an Analysis Group</option>
                </select>
                <Icon name="chevronDown" width={10} />
            </Combo>
            <Tools names={['groupSave', 'groupManage']} />
            <Separator />
            <Tools names={['handChart', 'handWindow']} />
            <Separator />
            <Tools names={['calendar', 'clockBars', 'chartBlack']} />
            <ToolButton $down aria-label="bar style"><Icon name="ohlc" /></ToolButton>
            <Tools names={['candles']} />
            <Separator />
            <Tools names={['squeeze', 'stretch']} />
            <Separator />
            <Tools names={['matrix']} />
            <Separator />
            <Tools names={['chartMove']} />
            <ToolButton $w={15} aria-label="more"><Icon name="caret" width={13} /></ToolButton>
            <Separator />
            <Tools names={['zoomIn', 'zoomOut']} />
            <Separator />
            <ToolButton $down aria-label="pointer"><Icon name="cursor" /></ToolButton>
            <Tools names={['chartText']} />
            <Separator />
            <Tools names={['tools']} />
            <Separator />
            <Tools names={['addTable']} />
            <Separator />
            <Tools names={['note']} />
        </Toolbar>
    )
}

const SheetTabs = () => (
    <TabBar>
        {['first', 'prev', 'next', 'last'].map(name => (
            <TabNav key={name} aria-label={name}><Icon name={name} width={15} /></TabNav>
        ))}
        <svg width="7" height="17" aria-hidden="true">
            <path d="M0 0h7v17z" fill="#fff" />
            <path d="M0 0l7 17" stroke="#000" />
        </svg>
        <Tab $active>TOP Ultimate Breakout</Tab>
        <svg width="7" height="17" aria-hidden="true">
            <path d="M0 0h6L0 17z" fill="#fff" />
            <path d="M6 0L0 17M4 8l3 9" stroke="#000" fill="none" />
        </svg>
        <Tab>Research</Tab>
        <svg width="7" height="17" aria-hidden="true">
            <path d="M0 .5h7M7 0L0 17" stroke="#000" />
        </svg>
        <TabRest />
    </TabBar>
)

const App = () => (
    <>
        <GlobalStyle />
        <Desktop>
            <BackWindow>
                <Strip $h={49} $bg="#fff" $line />
                <Strip $h={37} $bg="#fff" $line />
                <Strip $h={74} $bg="#fff" $line />
                <Strip $h={38} $bg="#fff" $line />
                <Strip $h={434} $bg="#f0f0f0" $align="flex-start">
                    <Icon name="backUp" width={4} />
                </Strip>
                <BackWrap><BackThumb /></BackWrap>
                <Strip $h={25} $bg="#f0f0f0" $align="flex-end">
                    <Icon name="backDown" width={4} />
                </Strip>
                <Strip $h={17} $bg="#fff" />
                <Strip $h={40} $bg="linear-gradient(90deg, #000f14 3px, #5a6468 3px, #5a6468 4px, #000f14 4px)" />
            </BackWindow>
            <Main>
                <AppWindow>
                    <TitleBar>
                        <Icon name="logo" />
                        <Title>TradeStation 9.5 - Webinar - TOP Ultimate Breakout - [Chart Analysis - @CL(D) 60 min [NYMEX] Crude Oil Continuous Contract [Oct16]]</Title>
                        <Badge>S<Icon name="badgeCaret" width={5} /></Badge>
                        <Badge>I<Icon name="badgeCaret" width={5} /></Badge>
                        <Frame>
                            <FrameButton aria-label="Minimise"><Icon name="frameMin" /></FrameButton>
                            <FrameButton aria-label="Restore"><Icon name="frameRestore" /></FrameButton>
                            <FrameButton $close aria-label="Close"><Icon name="frameClose" /></FrameButton>
                        </Frame>
                    </TitleBar>
                    <MenuBar>
                        <Icon name="doc" />
                        {menus.map(m => <MenuLink key={m} href="#">{m}</MenuLink>)}
                        <ChildButtons><ChildControls /></ChildButtons>
                    </MenuBar>
                    <MainToolbar />
                    <Body>
                        <SideBar>
                            <SideGrip />
                            <SideGroup>
                                {drawTools.map(name => (
                                    <SideButton key={name} aria-label={name}><Icon name={name} /></SideButton>
                                ))}
                            </SideGroup>
                            <SideGroup>
                                {shapeTools.map(name => (
                                    <SideButton key={name} aria-label={name}><Icon name={name} /></SideButton>
                                ))}
                                <SideButton>abc</SideButton>
                            </SideGroup>
                        </SideBar>
                        <ChartColumn>
                            <ChartFrame>
                                <Chart />
                                <Quote>
                                    {quote.map(([text, color, gap]) => (
                                        <QuoteItem key={text} $c={color} $gap={gap}>{text}</QuoteItem>
                                    ))}
                                </Quote>
                                <ChartButtons><ChildControls /></ChartButtons>
                            </ChartFrame>
                            <ScrollBar>
                                <ScrollButton aria-label="Scroll left"><Icon name="chevronLeft" /></ScrollButton>
                                <Track><Thumb /></Track>
                                <ScrollButton aria-label="Scroll right"><Icon name="chevronRight" /></ScrollButton>
                            </ScrollBar>
                        </ChartColumn>
                    </Body>
                    <SheetTabs />
                </AppWindow>
                <Taskbar><TaskChip /></Taskbar>
            </Main>
        </Desktop>
    </>
)

export default App
